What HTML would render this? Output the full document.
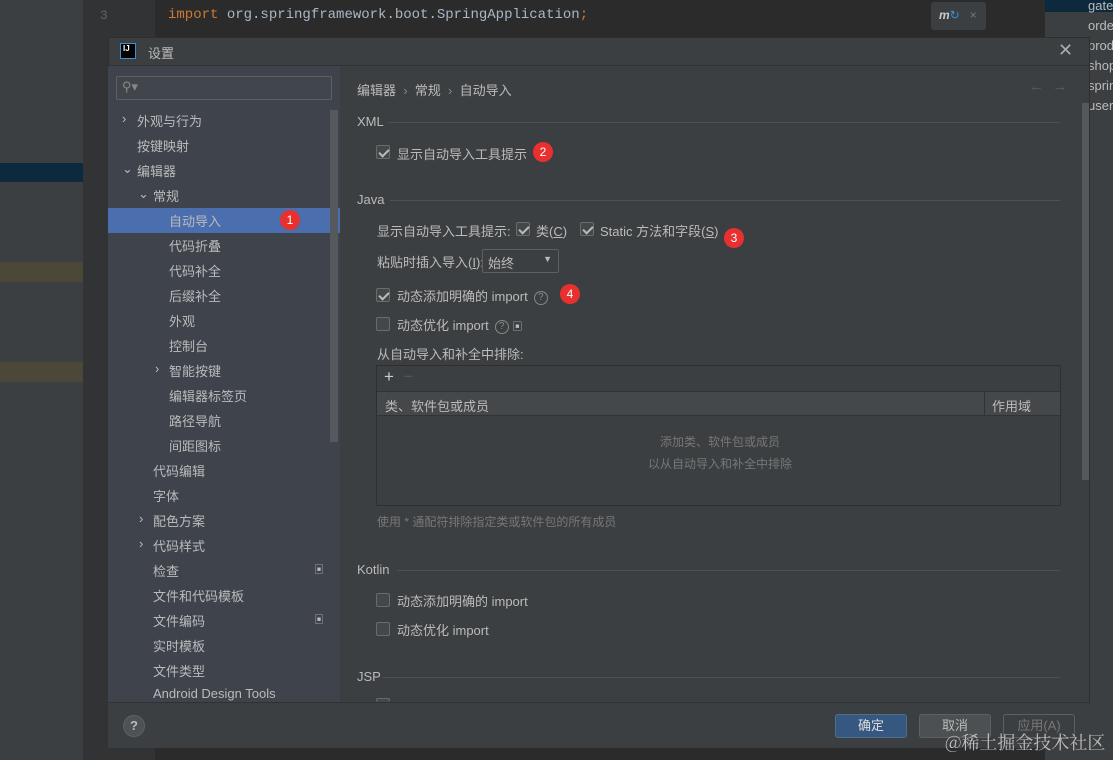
<!DOCTYPE html><html style="width:1113px;height:760px;overflow:hidden"><head><meta charset="utf-8"><style>
*{margin:0;padding:0;box-sizing:border-box}
body{width:1113px;height:760px;overflow:hidden;background:#2b2b2b;font-family:"Liberation Sans","Noto Sans CJK SC",sans-serif;font-size:13px;color:#bbbbbb;position:relative}
.a{position:absolute;white-space:nowrap}
.cb{position:absolute;width:14px;height:14px;border:1px solid #6b6b6b;border-radius:2px;background:#43494a}
.cb.on::after{content:"";position:absolute;left:4px;top:1px;width:4px;height:8px;border:solid #bbb;border-width:0 2px 2px 0;transform:rotate(45deg)}
.badge{position:absolute;width:20px;height:20px;border-radius:50%;background:#e8312f;color:#fff;font-size:12px;text-align:center;line-height:20px}
.sb div{position:absolute;white-space:nowrap}
.hr{position:absolute;height:1px;background:#515151}
.q{display:inline-block;width:14px;height:14px;border:1px solid #888;border-radius:50%;font-size:10px;line-height:12px;text-align:center;color:#888;vertical-align:middle;margin-left:6px}
.mono{font-family:"Liberation Mono",monospace;font-size:14px}
</style></head><body>
<div class="a" style="left:0;top:0;width:83px;height:760px;background:#3c3f41"></div>
<div class="a" style="left:0;top:163px;width:90px;height:19px;background:#0d293e"></div>
<div class="a" style="left:0;top:262px;width:90px;height:20px;background:#4b483a"></div>
<div class="a" style="left:0;top:362px;width:90px;height:20px;background:#4b483a"></div>
<div class="a" style="left:83px;top:0;width:72px;height:760px;background:#313335"></div>
<div class="a mono" style="left:100px;top:8px;color:#606366;font-size:13px">3</div>
<div class="a mono" style="left:168px;top:7px;color:#a9b7c6"><span style="color:#cc7832">import</span> org.springframework.boot.SpringApplication<span style="color:#cc7832">;</span></div>
<div class="a" style="left:931px;top:2px;width:55px;height:28px;background:#3c3f41;border-radius:3px;color:#777;font-size:12px;padding:6px 0 0 8px"><b style="color:#ccc;font-style:italic">m</b><span style="color:#3d8fd1">↻</span>&nbsp;&nbsp;&nbsp;×</div>
<div class="a" style="left:1045px;top:0;width:68px;height:760px;background:#3c3f41"></div>
<div class="a" style="left:1045px;top:0;width:68px;height:12px;background:#0d293e"></div>
<div class="a" style="left:1088px;top:-4px;color:#bbb;line-height:20px;font-size:13px">gate<br>orde<br>prod<br>shop<br>sprin<br>user</div>
<div class="a" style="left:108px;top:37px;width:982px;height:711px;background:#3c3f41;border:1px solid #2e2e2e"></div>
<div class="a" style="left:120px;top:43px;width:16px;height:16px;background:#000;border:1px solid #3d8fd1;color:#fff;font-size:8px;font-weight:bold;padding-left:2px">IJ</div>
<div class="a" style="left:148px;top:43px">设置</div>
<div class="a" style="left:1058px;top:40px;font-size:18px;color:#aaa">✕</div>
<div class="hr" style="left:108px;top:65px;width:982px;background:#323232"></div>
<div class="a" style="left:108px;top:66px;width:232px;height:636px;background:#3e434c"></div>
<div class="a" style="left:116px;top:76px;width:216px;height:24px;border:1px solid #5c6164;border-radius:2px;background:#41464c;color:#888;padding:2px 5px">⚲▾</div>
<div class="a" style="left:108px;top:208px;width:232px;height:25px;background:#4b6eaf"></div>
<div class="a" style="left:330px;top:110px;width:8px;height:332px;background:#55585c"></div>
<div class="sb">
<div style="left:122px;top:111px">›</div><div style="left:137px;top:111px">外观与行为</div>
<div style="left:137px;top:136px">按键映射</div>
<div style="left:122px;top:161px">⌄</div><div style="left:137px;top:161px">编辑器</div>
<div style="left:138px;top:186px">⌄</div><div style="left:153px;top:186px">常规</div>
<div style="left:169px;top:211px">自动导入</div>
<div style="left:169px;top:236px">代码折叠</div>
<div style="left:169px;top:261px">代码补全</div>
<div style="left:169px;top:286px">后缀补全</div>
<div style="left:169px;top:311px">外观</div>
<div style="left:169px;top:336px">控制台</div>
<div style="left:155px;top:361px">›</div><div style="left:169px;top:361px">智能按键</div>
<div style="left:169px;top:386px">编辑器标签页</div>
<div style="left:169px;top:411px">路径导航</div>
<div style="left:169px;top:436px">间距图标</div>
<div style="left:153px;top:461px">代码编辑</div>
<div style="left:153px;top:486px">字体</div>
<div style="left:139px;top:511px">›</div><div style="left:153px;top:511px">配色方案</div>
<div style="left:139px;top:536px">›</div><div style="left:153px;top:536px">代码样式</div>
<div style="left:153px;top:561px">检查</div><div style="left:314px;top:561px;font-size:10px">▣</div>
<div style="left:153px;top:586px">文件和代码模板</div>
<div style="left:153px;top:611px">文件编码</div><div style="left:314px;top:611px;font-size:10px">▣</div>
<div style="left:153px;top:636px">实时模板</div>
<div style="left:153px;top:661px">文件类型</div>
<div style="left:153px;top:686px">Android Design Tools</div>
</div>
<div class="badge" style="left:280px;top:210px">1</div>
<div class="a" style="left:357px;top:80px">编辑器 <span style="color:#888">&nbsp;›&nbsp;</span> 常规 <span style="color:#888">&nbsp;›&nbsp;</span> 自动导入</div>
<div class="a" style="left:1029px;top:78px;color:#5a5d5f;font-size:15px">←&nbsp;&nbsp;→</div>
<div class="a" style="left:1082px;top:103px;width:7px;height:377px;background:#55585c"></div>
<div class="a" style="left:357px;top:114px">XML</div><div class="hr" style="left:388px;top:122px;width:672px"></div>
<div class="cb on" style="left:376px;top:145px"></div><div class="a" style="left:397px;top:144px">显示自动导入工具提示</div>
<div class="badge" style="left:533px;top:142px">2</div>
<div class="a" style="left:357px;top:192px">Java</div><div class="hr" style="left:390px;top:200px;width:670px"></div>
<div class="a" style="left:377px;top:221px">显示自动导入工具提示:</div>
<div class="cb on" style="left:516px;top:222px"></div><div class="a" style="left:536px;top:221px">类(<u>C</u>)</div>
<div class="cb on" style="left:580px;top:222px"></div><div class="a" style="left:600px;top:221px">Static 方法和字段(<u>S</u>)</div>
<div class="badge" style="left:724px;top:228px">3</div>
<div class="a" style="left:377px;top:252px">粘贴时插入导入(<u>I</u>):</div>
<div class="a" style="left:482px;top:249px;width:77px;height:24px;border:1px solid #5e6060;border-radius:2px;background:#3c3f41;padding:3px 5px">始终<span style="position:absolute;right:6px;top:4px;font-size:9px">▼</span></div>
<div class="cb on" style="left:376px;top:288px"></div><div class="a" style="left:397px;top:286px">动态添加明确的 import<span class="q">?</span></div>
<div class="badge" style="left:560px;top:284px">4</div>
<div class="cb" style="left:376px;top:317px"></div><div class="a" style="left:397px;top:315px">动态优化 import<span class="q">?</span> <span style="font-size:10px">▣</span></div>
<div class="a" style="left:377px;top:344px">从自动导入和补全中排除:</div>
<div class="a" style="left:376px;top:365px;width:685px;height:141px;border:1px solid #2f2f2f;background:#3c3f41"></div>
<div class="a" style="left:384px;top:367px;font-size:17px;color:#ccc">+ <span style="color:#555">&nbsp;−</span></div>
<div class="a" style="left:377px;top:391px;width:683px;height:25px;background:#45484a;border-top:1px solid #333;border-bottom:1px solid #333"></div>
<div class="a" style="left:984px;top:392px;width:1px;height:23px;background:#333"></div>
<div class="a" style="left:385px;top:396px">类、软件包或成员</div><div class="a" style="left:992px;top:396px">作用域</div>
<div class="a" style="left:645px;top:431px;color:#777;font-size:12px;text-align:center;line-height:22px;width:150px">添加类、软件包或成员<br>以从自动导入和补全中排除</div>
<div class="a" style="left:377px;top:513px;color:#777;font-size:12px">使用 * 通配符排除指定类或软件包的所有成员</div>
<div class="a" style="left:357px;top:562px">Kotlin</div><div class="hr" style="left:397px;top:570px;width:663px"></div>
<div class="cb" style="left:376px;top:593px"></div><div class="a" style="left:397px;top:591px">动态添加明确的 import</div>
<div class="cb" style="left:376px;top:622px"></div><div class="a" style="left:397px;top:620px">动态优化 import</div>
<div class="a" style="left:357px;top:669px">JSP</div><div class="hr" style="left:383px;top:677px;width:677px"></div>
<div class="cb" style="left:376px;top:698px;height:4px;border-bottom:none"></div>
<div class="a" style="left:108px;top:702px;width:982px;height:46px;background:#3c3f41;border-top:1px solid #323232"></div>
<div class="a" style="left:123px;top:715px;width:22px;height:22px;border-radius:50%;background:#4f5254;border:1px solid #5e6163;color:#bbb;text-align:center;line-height:20px;font-weight:bold">?</div>
<div class="a" style="left:835px;top:714px;width:72px;height:24px;background:#365880;border:1px solid #4c708c;border-radius:3px;color:#ddd;text-align:center;line-height:22px">确定</div>
<div class="a" style="left:919px;top:714px;width:72px;height:24px;background:#4c5052;border:1px solid #5e6060;border-radius:3px;color:#bbb;text-align:center;line-height:22px">取消</div>
<div class="a" style="left:1003px;top:714px;width:72px;height:24px;border:1px solid #5e6060;border-radius:3px;color:#777;text-align:center;line-height:22px">应用(A)</div>
<div class="a" style="left:945px;top:731px;color:#ddd;font-size:18px;line-height:22px;font-family:'Noto Serif CJK SC',serif;opacity:.8">@稀土掘金技术社区</div>
</body></html>
